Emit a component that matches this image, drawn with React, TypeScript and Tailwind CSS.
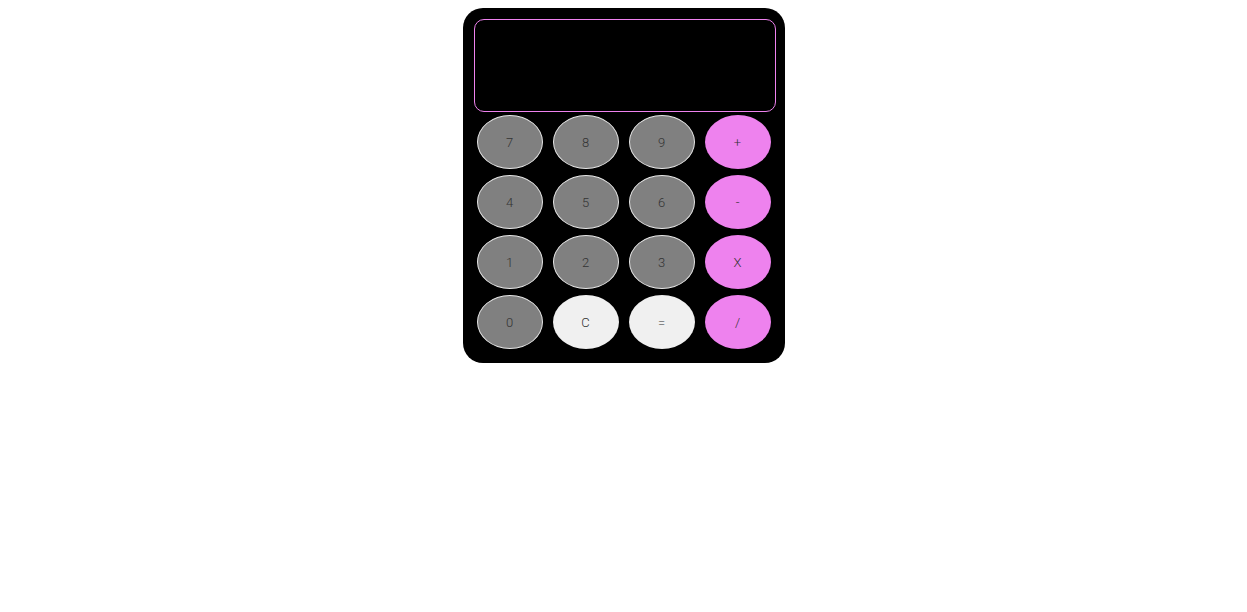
import { useState } from 'react';

type Key = { label: string; kind: 'num' | 'op' | 'util' };

const keys: Key[] = [
  { label: '7', kind: 'num' },
  { label: '8', kind: 'num' },
  { label: '9', kind: 'num' },
  { label: '+', kind: 'op' },
  { label: '4', kind: 'num' },
  { label: '5', kind: 'num' },
  { label: '6', kind: 'num' },
  { label: '-', kind: 'op' },
  { label: '1', kind: 'num' },
  { label: '2', kind: 'num' },
  { label: '3', kind: 'num' },
  { label: 'X', kind: 'op' },
  { label: '0', kind: 'num' },
  { label: 'C', kind: 'util' },
  { label: '=', kind: 'util' },
  { label: '/', kind: 'op' },
];

const keyStyles = {
  num: 'bg-[#808080] border border-[#e5e5e5]',
  op: 'bg-[#ee82ee]',
  util: 'bg-[#f0f0f0]',
};

export default function App() {
  const [display, setDisplay] = useState('');

  const press = (label: string) => {
    if (label === 'C') return setDisplay('');
    if (label === '=') {
      try {
        const expr = display.replace(/X/g, '*');
        // eslint-disable-next-line no-new-func
        setDisplay(String(Function(`return (${expr})`)()));
      } catch {
        setDisplay('Error');
      }
      return;
    }
    setDisplay(display + label);
  };

  return (
    <div className="min-h-screen bg-white pt-2 font-['Roboto',sans-serif]">
      <div className="mx-auto w-[322px] rounded-[20px] bg-black pl-[11px] pr-[9px] pt-[11px] pb-[14px]">
        {/* Display */}
        <div className="flex h-[93px] w-[302px] items-center justify-end rounded-[10px] border border-[#ee82ee] px-3 text-3xl text-white">
          {display}
        </div>

        {/* Keypad */}
        <div className="mt-[3px] grid w-[300px] grid-cols-4 gap-x-[10px] gap-y-[6px] px-[3px]">
          {keys.map((k) => (
            <button
              key={k.label}
              onClick={() => press(k.label)}
              className={`flex h-[54px] w-[66px] items-center justify-center rounded-[50%] pt-px text-[13px] font-light text-[#333333] ${keyStyles[k.kind]}`}
            >
              {k.label}
            </button>
          ))}
        </div>
      </div>
    </div>
  );
}
